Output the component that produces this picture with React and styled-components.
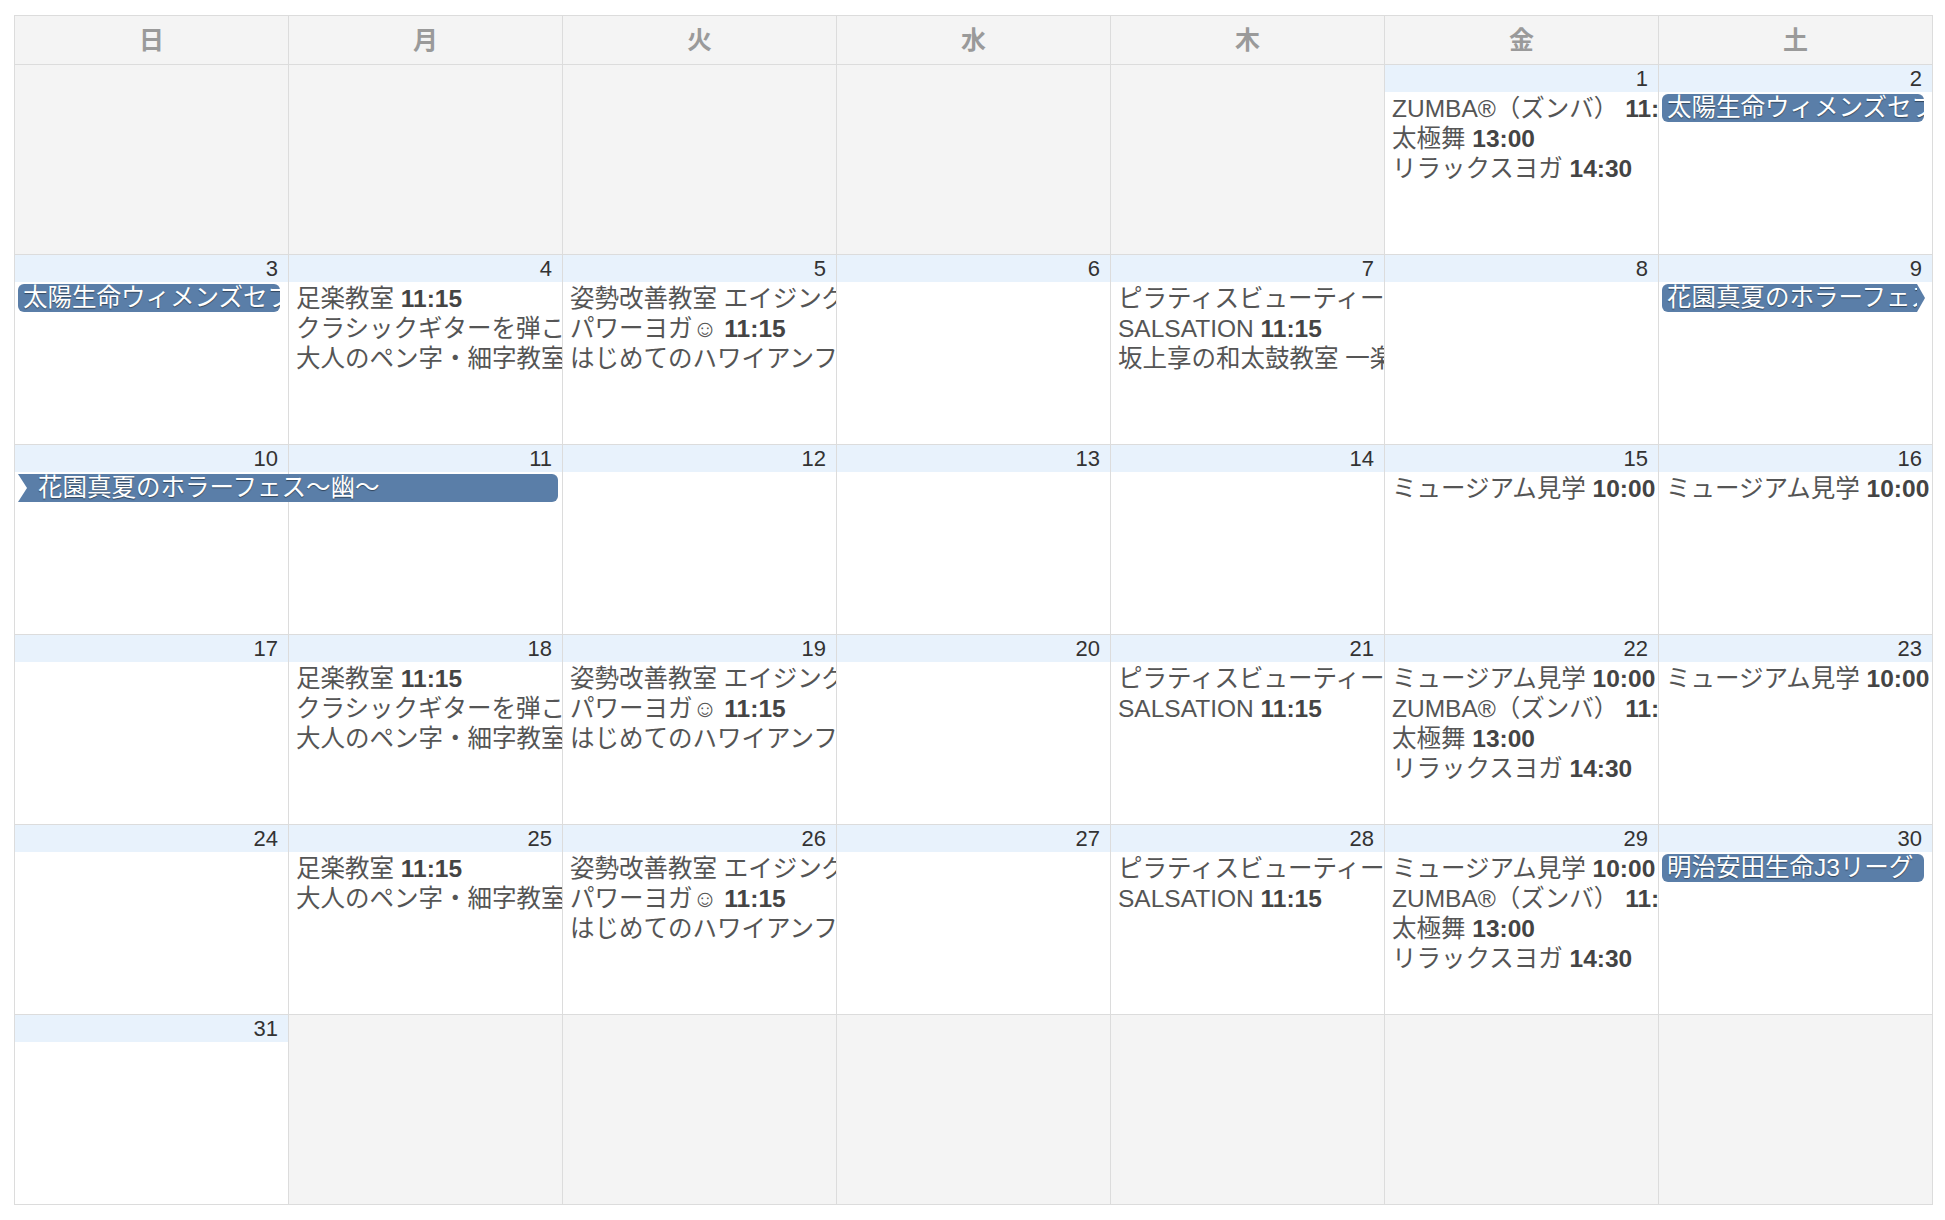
import React from 'react';
import styled, { createGlobalStyle, css } from 'styled-components';

const GlobalStyle = createGlobalStyle`
  html, body { margin: 0; padding: 0; background: #fff; }
  body {
    font-family: "Liberation Sans", Arial, "Noto Sans CJK JP", "DejaVu Sans", sans-serif;
    -webkit-font-smoothing: antialiased;
  }
`;

const Page = styled.div`
  padding: 15px 0 15px 14px;
`;

const Calendar = styled.div`
  width: 1917px;
  border: 1px solid #dcdcdc;
  background: #dcdcdc;
  display: flex;
  flex-direction: column;
  gap: 1px;
`;

const HeaderRow = styled.div`
  display: grid;
  grid-template-columns: repeat(7, 273px);
  column-gap: 1px;
  height: 48px;
`;

const HeaderCell = styled.div`
  background: #f4f4f4;
  display: flex;
  align-items: center;
  justify-content: center;
  padding-bottom: 4px;
  font-size: 25px;
  font-weight: bold;
  color: #9a9a9a;
`;

const Week = styled.div`
  display: grid;
  grid-template-columns: repeat(7, 273px);
  grid-template-rows: 27px repeat(5, 30px) 1fr;
  column-gap: 1px;
  height: 189px;
`;

const DayBg = styled.div`
  grid-column: ${(p) => p.$col};
  grid-row: 1 / -1;
  background: ${(p) => (p.$outside ? '#f4f4f4' : '#fff')};
`;

const DayNumber = styled.div`
  grid-column: ${(p) => p.$col};
  grid-row: 1;
  background: #e8f2fc;
  text-align: right;
  padding-right: 10px;
  font-size: 22px;
  line-height: 27px;
  color: #333;
`;

const EventLine = styled.div`
  grid-column: ${(p) => p.$col};
  grid-row: ${(p) => p.$row};
  min-width: 0;
  padding: 2px 0 0 7px;
  white-space: nowrap;
  overflow: hidden;
  font-size: 24.5px;
  line-height: 29px;
  color: #555;
`;

const Time = styled.b`
  color: #444;
  font-weight: bold;
`;

const Bar = styled.div`
  grid-column: ${(p) => p.$col} / span ${(p) => p.$span};
  grid-row: ${(p) => p.$row};
  position: relative;
  margin: 2px ${(p) => p.$mr}px 0 3px;
  height: 28px;
  background: #5a7ea8;
  border-radius: 6px;
  ${(p) =>
    p.$notch &&
    css`
      border-top-left-radius: 0;
      border-bottom-left-radius: 0;
      &::before {
        content: '';
        position: absolute;
        left: 0;
        top: 0;
        border-top: 14px solid transparent;
        border-bottom: 14px solid transparent;
        border-left: 9px solid #fff;
      }
    `}
  ${(p) =>
    p.$arrow &&
    css`
      border-top-right-radius: 0;
      border-bottom-right-radius: 0;
      &::after {
        content: '';
        position: absolute;
        left: 100%;
        top: 0;
        border-top: 14px solid transparent;
        border-bottom: 14px solid transparent;
        border-left: 8px solid #5a7ea8;
      }
    `}
`;

const BarText = styled.div`
  overflow: hidden;
  white-space: nowrap;
  height: 28px;
  padding-left: ${(p) => (p.$notch ? 20 : 5)}px;
  color: #fff;
  font-size: 24.5px;
  line-height: 28px;
  text-shadow: 0 1px 1px rgba(0, 0, 0, 0.45);
`;

const DOW = ['日', '月', '火', '水', '木', '金', '土'];

const ZUMBA = ['ZUMBA®（ズンバ）', '11:00'];
const TAIKYOKU = ['太極舞', '13:00'];
const RELAX = ['リラックスヨガ', '14:30'];
const MUSEUM = ['ミュージアム見学', '10:00'];
const ASHIRAKU = ['足楽教室', '11:15'];
const GUITAR = ['クラシックギターを弾こう', '13:00'];
const PEN = ['大人のペン字・細字教室', '15:00'];
const SHISEI = ['姿勢改善教室 エイジングケア', '10:00'];
const POWER = ['パワーヨガ☺', '11:15'];
const HULA = ['はじめてのハワイアンフラ', '13:30'];
const PILATES = ['ピラティスビューティー', '10:00'];
const SALSA = ['SALSATION', '11:15'];
const TAIKO = ['坂上享の和太鼓教室 一楽会', '14:00'];

const TAIYO = '太陽生命ウィメンズセブンズシリーズ2022';
const HORROR = '花園真夏のホラーフェス～幽～';

const weeks = [
  {
    days: [null, null, null, null, null, { n: 1, ev: [ZUMBA, TAIKYOKU, RELAX] }, { n: 2, ev: [] }],
    bars: [{ col: 7, span: 1, text: TAIYO, mr: 8 }],
  },
  {
    days: [
      { n: 3, ev: [] },
      { n: 4, ev: [ASHIRAKU, GUITAR, PEN] },
      { n: 5, ev: [SHISEI, POWER, HULA] },
      { n: 6, ev: [] },
      { n: 7, ev: [PILATES, SALSA, TAIKO] },
      { n: 8, ev: [] },
      { n: 9, ev: [] },
    ],
    bars: [
      { col: 1, span: 1, text: TAIYO, mr: 8 },
      { col: 7, span: 1, text: HORROR, mr: 15, arrow: true },
    ],
  },
  {
    days: [
      { n: 10, ev: [] },
      { n: 11, ev: [] },
      { n: 12, ev: [] },
      { n: 13, ev: [] },
      { n: 14, ev: [] },
      { n: 15, ev: [MUSEUM] },
      { n: 16, ev: [MUSEUM] },
    ],
    bars: [{ col: 1, span: 2, text: HORROR, mr: 4, notch: true }],
  },
  {
    days: [
      { n: 17, ev: [] },
      { n: 18, ev: [ASHIRAKU, GUITAR, PEN] },
      { n: 19, ev: [SHISEI, POWER, HULA] },
      { n: 20, ev: [] },
      { n: 21, ev: [PILATES, SALSA] },
      { n: 22, ev: [MUSEUM, ZUMBA, TAIKYOKU, RELAX] },
      { n: 23, ev: [MUSEUM] },
    ],
    bars: [],
  },
  {
    days: [
      { n: 24, ev: [] },
      { n: 25, ev: [ASHIRAKU, PEN] },
      { n: 26, ev: [SHISEI, POWER, HULA] },
      { n: 27, ev: [] },
      { n: 28, ev: [PILATES, SALSA] },
      { n: 29, ev: [MUSEUM, ZUMBA, TAIKYOKU, RELAX] },
      { n: 30, ev: [] },
    ],
    bars: [{ col: 7, span: 1, text: '明治安田生命J3リーグ', mr: 8 }],
  },
  {
    days: [{ n: 31, ev: [] }, null, null, null, null, null, null],
    bars: [],
  },
];

function WeekRow({ week }) {
  return (
    <Week>
      {week.days.map((day, i) => (
        <DayBg key={`bg${i}`} $col={i + 1} $outside={!day} />
      ))}
      {week.days.map((day, i) =>
        day ? (
          <DayNumber key={`n${i}`} $col={i + 1}>
            {day.n}
          </DayNumber>
        ) : null
      )}
      {week.days.map((day, i) =>
        day
          ? day.ev.map(([name, time], j) => (
              <EventLine key={`e${i}-${j}`} $col={i + 1} $row={j + 2}>
                {name} <Time>{time}</Time>
              </EventLine>
            ))
          : null
      )}
      {week.bars.map((b, k) => (
        <Bar
          key={`b${k}`}
          $col={b.col}
          $span={b.span}
          $row={2}
          $mr={b.mr}
          $notch={b.notch}
          $arrow={b.arrow}
        >
          <BarText $notch={b.notch}>{b.text}</BarText>
        </Bar>
      ))}
    </Week>
  );
}

export default function App() {
  return (
    <>
      <GlobalStyle />
      <Page>
        <Calendar>
          <HeaderRow>
            {DOW.map((d) => (
              <HeaderCell key={d}>{d}</HeaderCell>
            ))}
          </HeaderRow>
          {weeks.map((w, i) => (
            <WeekRow key={i} week={w} />
          ))}
        </Calendar>
      </Page>
    </>
  );
}
